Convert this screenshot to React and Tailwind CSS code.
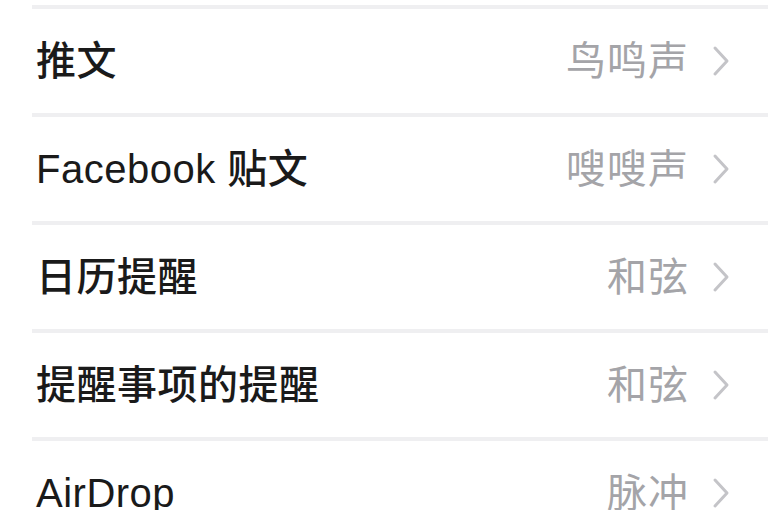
import React from "react";

const rows = [
  ["推文", "鸟鸣声"],
  ["Facebook 贴文", "嗖嗖声"],
  ["日历提醒", "和弦"],
  ["提醒事项的提醒", "和弦"],
  ["AirDrop", "脉冲"],
];

function Chevron() {
  return (
    <svg width="20" height="32" viewBox="0 0 20 32" className="shrink-0">
      <path d="M4 3 L16 16 L4 29" fill="none" stroke="#c4c4c8" strokeWidth="3" strokeLinecap="round" strokeLinejoin="round" />
    </svg>
  );
}

export default function App() {
  return (
    <div
      className="w-[768px] h-[510px] overflow-hidden bg-white pt-[5px]"
      style={{ fontFamily: '"Liberation Sans", "Noto Sans CJK SC", sans-serif' }}
    >
      {rows.map(([label, value]) => (
        <div key={label}>
          <div className="ml-[32px] h-[4px] bg-[#efeff1]" />
          <div className="h-[104px] flex items-center justify-between pl-[36px] pr-[37px]">
            <span className="text-[40px] leading-none font-medium text-[#1a1a1a] tracking-[0.5px]">{label}</span>
            <div className="flex items-center gap-[22px]">
              <span className="text-[40px] leading-none text-[#a4a4a8] tracking-[1px]">{value}</span>
              <Chevron />
            </div>
          </div>
        </div>
      ))}
    </div>
  );
}
